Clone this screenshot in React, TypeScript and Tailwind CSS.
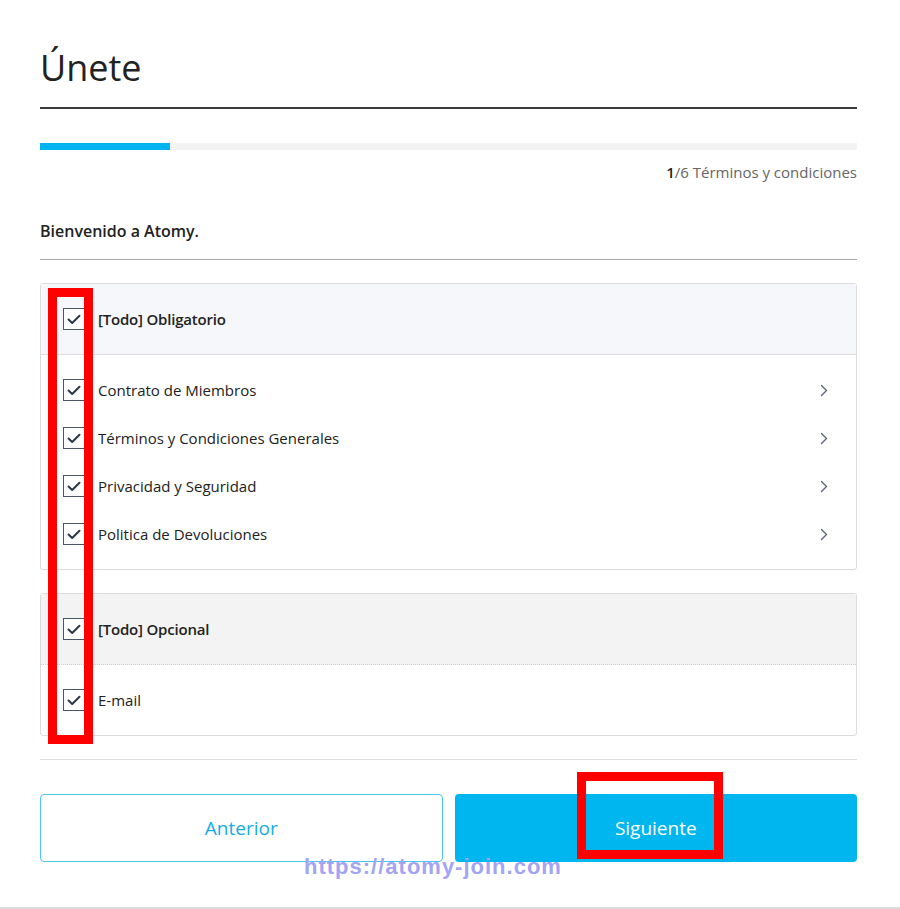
import React from "react";

function Check() {
  return (
    <span className="flex h-[22px] w-[22px] shrink-0 items-center justify-center border border-[#4a5568] bg-white">
      <svg width="14" height="11" viewBox="0 0 14 11" fill="none">
        <path d="M1.5 5.5 L5.2 9 L12.5 1.8" stroke="#2d3748" strokeWidth="2" strokeLinecap="round" strokeLinejoin="round" />
      </svg>
    </span>
  );
}

function Chevron() {
  return (
    <svg width="8" height="13" viewBox="0 0 8 13" fill="none">
      <path d="M1.5 1.5 L6.5 6.5 L1.5 11.5" stroke="#5a6478" strokeWidth="1.4" strokeLinecap="round" strokeLinejoin="round" />
    </svg>
  );
}

function Item({ label, chevron = true }: { label: string; chevron?: boolean }) {
  return (
    <div className="flex h-[48px] items-center pl-[22px] pr-[28px]">
      <Check />
      <span className="ml-[13px] flex-1 text-[15px] text-[#222]">{label}</span>
      {chevron && <Chevron />}
    </div>
  );
}

export default function App() {
  return (
    <div
      className="relative h-[909px] w-[900px] overflow-hidden border-b-2 border-[#dcdcdc] bg-white"
      style={{ fontFamily: '"Open Sans", "Noto Sans", sans-serif' }}
    >
      <div className="ml-[40px] w-[817px]">
        <div className="mt-[43px] h-[50px] text-[36px] leading-[50px] text-[#222]">Únete</div>
        <div className="mt-[14px] border-b-2 border-[#3a3a3a]" />
        <div className="mt-[34px] flex h-[7px] bg-[#f3f3f3]">
          <div className="h-full w-[130px] bg-[#00b4ef]" />
        </div>
        <div className="mt-[12px] text-right text-[15px] leading-[20px] text-[#666]">
          <span className="font-semibold text-[#222]">1</span>/6 Términos y condiciones
        </div>
        <div className="mt-[38px] border-b border-[#a8a8a8] pb-[17px] text-[16px] font-semibold leading-[22px] text-[#222]">
          Bienvenido a Atomy.
        </div>

        <div className="mt-[23px] rounded-[3px] border border-[#dcdcdc]">
          <div className="flex h-[71px] items-center border-b border-[#dcdcdc] bg-[#f5f7fa] pl-[22px]">
            <Check />
            <span className="ml-[13px] text-[15px] font-semibold tracking-[-0.2px] text-[#222]">[Todo] Obligatorio</span>
          </div>
          <div className="py-[11px]">
            <Item label="Contrato de Miembros" />
            <Item label="Términos y Condiciones Generales" />
            <Item label="Privacidad y Seguridad" />
            <Item label="Politica de Devoluciones" />
          </div>
        </div>

        <div className="mt-[23px] rounded-[3px] border border-[#dcdcdc]">
          <div className="flex h-[71px] items-center border-b border-dotted border-[#cfcfcf] bg-[#f3f3f3] pl-[22px]">
            <Check />
            <span className="ml-[13px] text-[15px] font-semibold tracking-[-0.2px] text-[#222]">[Todo] Opcional</span>
          </div>
          <div className="py-[11px]">
            <Item label="E-mail" chevron={false} />
          </div>
        </div>

        <div className="mt-[23px] border-t border-[#dedede]" />

        <div className="mt-[34px] grid grid-cols-2 gap-[12px]">
          <button className="flex h-[68px] items-center justify-center rounded-[4px] border border-[#4fc6f2] bg-white text-[19px] text-[#13aee6]">
            Anterior
          </button>
          <button className="flex h-[68px] items-center justify-center rounded-[4px] bg-[#00b6ef] text-[19px] text-white">
            Siguiente
          </button>
        </div>
      </div>

      {/* annotation overlays */}
      <div className="pointer-events-none absolute left-[48px] top-[288px] h-[456px] w-[45px] border-[9px] border-[#ff0000]" />
      <div className="pointer-events-none absolute left-[577px] top-[772px] h-[87px] w-[146px] border-[9px] border-[#ff0000]" />
      <div
        className="pointer-events-none absolute left-[304px] top-[854px] text-[22px] font-bold leading-[26px] tracking-[1px] text-[#a3a5f3]"
        style={{ fontFamily: '"Liberation Sans", Arial, sans-serif' }}
      >
        https://atomy-join.com
      </div>
    </div>
  );
}
